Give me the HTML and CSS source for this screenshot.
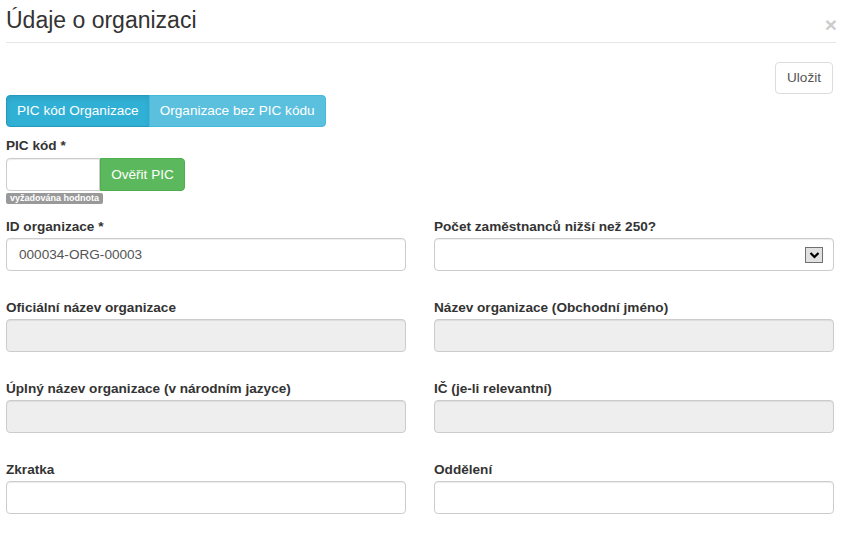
FILE: index.html
```html
<!DOCTYPE html>
<html lang="cs">
<head>
    <meta charset="UTF-8">
    <meta name="viewport" content="width=device-width, initial-scale=1.0">
    <title>Údaje o organizaci</title>
    <link rel="stylesheet" href="styles.css">
</head>
<body>
    <div class="modal">
        <div class="modal-header">
            <h3>Údaje o organizaci</h3>
            <span class="close">&times;</span>
        </div>

        <div class="toolbar">
            <button class="btn btn-default">Uložit</button>
        </div>

        <div class="btn-group">
            <button class="btn btn-info active">PIC kód Organizace</button>
            <button class="btn btn-info">Organizace bez PIC kódu</button>
        </div>

        <div class="pic-group">
            <label for="pic">PIC kód *</label>
            <div class="input-group">
                <input type="text" id="pic" class="form-control">
                <button class="btn btn-success">Ověřit PIC</button>
            </div>
            <span class="badge">vyžadována hodnota</span>
        </div>

        <div class="form-grid">
            <div class="form-group">
                <label for="orgId">ID organizace *</label>
                <input type="text" id="orgId" class="form-control" value="000034-ORG-00003">
            </div>
            <div class="form-group">
                <label for="sme">Počet zaměstnanců nižší než 250?</label>
                <div class="form-control select">
                    <span class="select-arrow">
                        <svg width="11" height="8" viewBox="0 0 11 8"><path d="M1.5 2 L5.5 6 L9.5 2" fill="none" stroke="#000" stroke-width="2.2"/></svg>
                    </span>
                </div>
            </div>
            <div class="form-group">
                <label>Oficiální název organizace</label>
                <input type="text" class="form-control" disabled>
            </div>
            <div class="form-group">
                <label>Název organizace (Obchodní jméno)</label>
                <input type="text" class="form-control" disabled>
            </div>
            <div class="form-group">
                <label>Úplný název organizace (v národním jazyce)</label>
                <input type="text" class="form-control" disabled>
            </div>
            <div class="form-group">
                <label>IČ (je-li relevantní)</label>
                <input type="text" class="form-control" disabled>
            </div>
            <div class="form-group">
                <label for="short">Zkratka</label>
                <input type="text" id="short" class="form-control">
            </div>
            <div class="form-group">
                <label for="dept">Oddělení</label>
                <input type="text" id="dept" class="form-control">
            </div>
        </div>
    </div>
</body>
</html>
```

FILE: styles.css
```css
* {
    box-sizing: border-box;
}
body {
    margin: 0;
    font-family: "Liberation Sans", Arial, sans-serif;
    font-size: 13.6px;
    color: #333;
    background-color: #fff;
}
.modal {
    padding: 0 9px 0 6px;
}
.modal-header {
    display: flex;
    justify-content: space-between;
    align-items: center;
    height: 43px;
    border-bottom: 1px solid #e5e5e5;
    margin-right: -2px;
}
.modal-header h3 {
    margin: 0;
    font-size: 23px;
    font-weight: normal;
    line-height: 1;
    padding-bottom: 1px;
}
.close {
    font-size: 21px;
    font-weight: bold;
    color: #000;
    opacity: 0.2;
    line-height: 1;
    margin-top: 6px;
    margin-right: -1px;
}
.toolbar {
    display: flex;
    justify-content: flex-end;
    padding-top: 19px;
    margin-right: 1px;
}
.btn {
    font-family: inherit;
    font-size: 13.6px;
    line-height: 20px;
    padding: 5px 12px;
    border: 1px solid transparent;
    border-radius: 4px;
    white-space: nowrap;
    cursor: pointer;
}
.btn-default {
    background-color: #fff;
    border-color: #ddd;
    color: #555;
    height: 32px;
    padding: 5px 11px;
}
.btn-group {
    display: flex;
    margin-top: 1px;
}
.btn-info {
    background-color: #5bc0de;
    border-color: #46b8da;
    color: #fff;
    height: 32px;
    padding: 5px 10px;
}
.btn-group .btn:first-child {
    border-radius: 4px 0 0 4px;
}
.btn-group .btn:last-child {
    border-radius: 0 4px 4px 0;
    margin-left: -1px;
}
.btn-info.active {
    background-color: #31b0d5;
    border-color: #269abc;
    box-shadow: inset 0 3px 5px rgba(0, 0, 0, 0.08);
}
label {
    display: block;
    font-weight: bold;
    line-height: 20px;
    margin-bottom: 1px;
}
.pic-group {
    margin-top: 9px;
}
.pic-group label {
    margin-bottom: 2px;
}
.input-group {
    display: flex;
    width: 179px;
}
.input-group .form-control {
    width: 94px;
    height: 33px;
    border-radius: 4px 0 0 4px;
}
.btn-success {
    background-color: #5cb85c;
    border-color: #4cae4c;
    color: #fff;
    height: 33px;
    border-radius: 0 4px 4px 0;
    padding: 5px 8px;
    flex: 1;
}
.badge {
    display: inline-block;
    margin-top: 2px;
    background-color: #999;
    color: #fff;
    font-size: 9px;
    font-weight: bold;
    line-height: 11px;
    padding: 0 4px;
    border-radius: 2px;
    vertical-align: top;
}
.form-grid {
    display: grid;
    grid-template-columns: 400px 400px;
    column-gap: 28px;
    row-gap: 27px;
    margin-top: 11px;
}
.form-control {
    display: block;
    width: 100%;
    height: 33px;
    padding: 6px 12px;
    font-family: inherit;
    font-size: 13.6px;
    color: #555;
    background-color: #fff;
    border: 1px solid #ccc;
    border-radius: 4px;
    box-shadow: inset 0 1px 1px rgba(0, 0, 0, 0.075);
}
.form-control:disabled {
    background-color: #eee;
}
.select {
    display: flex;
    justify-content: flex-end;
    align-items: center;
    padding: 0 10px 0 0;
}
.select-arrow {
    display: flex;
    align-items: center;
    justify-content: center;
    width: 18px;
    height: 16px;
    background-color: #e1e1e1;
    border: 1px solid #707070;
}
```
